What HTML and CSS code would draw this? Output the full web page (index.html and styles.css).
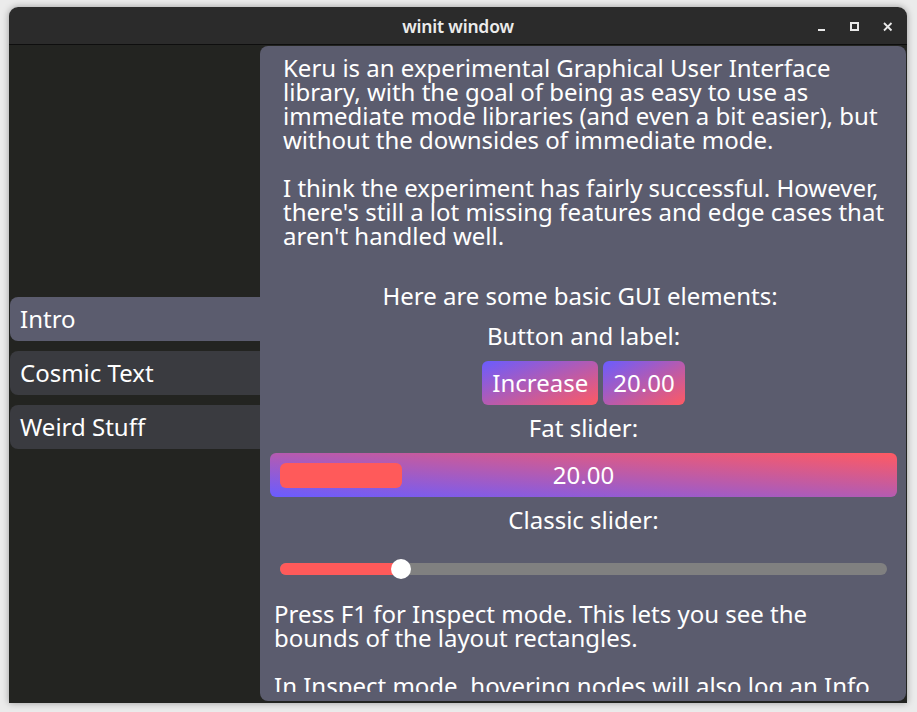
FILE: index.html
```html
<!DOCTYPE html>
<html>
<head>
<meta charset="utf-8">
<link rel="stylesheet" href="styles.css">
</head>
<body>
<div class="window">
  <div class="titlebar">
    <span class="title">winit window</span>
    <div class="controls">
      <svg class="ctl min" width="10" height="10" viewBox="0 0 10 10"><rect x="1" y="7" width="7" height="2" fill="#e8e8e8"/></svg>
      <svg class="ctl max" width="10" height="10" viewBox="0 0 10 10"><rect x="1" y="1" width="7" height="7" fill="none" stroke="#e8e8e8" stroke-width="2"/></svg>
      <svg class="ctl close" width="10" height="10" viewBox="0 0 10 10"><path d="M1 1 L8.5 8.5 M8.5 1 L1 8.5" stroke="#e8e8e8" stroke-width="1.8"/></svg>
    </div>
  </div>
  <div class="main">
    <div class="sidebar">
      <div class="tab active">Intro</div>
      <div class="tab">Cosmic Text</div>
      <div class="tab">Weird Stuff</div>
    </div>
    <div class="panel">
      <div class="intro">
        Keru is an experimental Graphical User Interface<br>
        library, with the goal of being as easy to use as<br>
        immediate mode libraries (and even a bit easier), but<br>
        without the downsides of immediate mode.<br>
        <br>
        I think the experiment has fairly successful. However,<br>
        there's still a lot missing features and edge cases that<br>
        aren't handled well.
      </div>
      <div class="label first">Here are some basic GUI elements:</div>
      <div class="label second">Button and label:</div>
      <div class="buttons">
        <div class="btn">Increase</div>
        <div class="btn">20.00</div>
      </div>
      <div class="label fat-label">Fat slider:</div>
      <div class="fat-slider">
        <div class="fat-fill" style="width: 122px"></div>
        <span class="fat-value">20.00</span>
      </div>
      <div class="label classic-label">Classic slider:</div>
      <div class="classic-slider">
        <div class="track">
          <div class="track-fill" style="width: 121px"></div>
          <div class="knob"></div>
        </div>
      </div>
      <div class="outro">
        Press F1 for Inspect mode. This lets you see the<br>
        bounds of the layout rectangles.<br>
        <br>
        In Inspect mode, hovering nodes will also log an Info<br>
        message with the node's name and location.
      </div>
    </div>
  </div>
</div>
</body>
</html>
```
FILE: styles.css
```css
html, body {
  margin: 0;
  padding: 0;
}
body {
  background: #ebebeb;
  width: 917px;
  height: 712px;
  overflow: hidden;
  font-family: "Noto Sans", sans-serif;
}
.window {
  margin: 7px 0 0 9px;
  width: 898px;
  height: 696px;
  display: flex;
  flex-direction: column;
  border-radius: 9px 9px 0 0;
  overflow: hidden;
  box-shadow: 0 0 7px rgba(0, 0, 0, 0.35);
}
.titlebar {
  height: 37px;
  flex: none;
  background: #2b2b2b;
  border-bottom: 1px solid #0e0e0e;
  display: flex;
  align-items: center;
  justify-content: center;
  position: relative;
}
.title {
  color: #ececec;
  font-size: 17.5px;
  font-weight: 600;
  letter-spacing: -0.2px;
}
.controls {
  position: absolute;
  right: 14px;
  top: 15px;
  display: flex;
  gap: 23px;
}
.ctl {
  display: block;
}
.main {
  flex: 1;
  display: flex;
  background: #232421;
  padding: 1px 1px 2px 1px;
  min-height: 0;
}
.sidebar {
  width: 250px;
  flex: none;
  display: flex;
  flex-direction: column;
  justify-content: center;
  gap: 10px;
  padding-bottom: 2px;
}
.tab {
  height: 44px;
  box-sizing: border-box;
  border-radius: 8px 0 0 8px;
  background: #3a3b40;
  color: #ffffff;
  font-size: 24px;
  line-height: 43px;
  padding-left: 10px;
}
.tab.active {
  background: #5b5c6e;
}
.panel {
  flex: 1;
  background: #5b5c6e;
  border-radius: 8px;
  overflow: hidden;
  display: flex;
  flex-direction: column;
  align-items: center;
  padding: 10px 9px 0 10px;
  color: #ffffff;
  font-size: 24px;
  line-height: 24px;
}
.panel > * {
  flex: none;
}
.intro {
  align-self: stretch;
  padding-left: 13px;
  white-space: nowrap;
}
.outro {
  align-self: stretch;
  padding: 5px 0 0 4px;
  margin-top: 6px;
  height: 90px;
  overflow: hidden;
  white-space: nowrap;
}
.label {
  height: 24px;
}
.label.first {
  margin-top: 36px;
  padding-right: 7px;
}
.label.second {
  margin-top: 16px;
}
.label.fat-label {
  margin-top: 11px;
}
.label.classic-label {
  margin-top: 11px;
}
.buttons {
  display: flex;
  gap: 5px;
  margin-top: 13px;
}
.btn {
  height: 44px;
  line-height: 43px;
  padding: 0 10px;
  border-radius: 6px;
  background: linear-gradient(to bottom right, #6a5cff, #ff5a62);
}
.fat-slider {
  align-self: stretch;
  margin-top: 13px;
  height: 44px;
  border-radius: 6px;
  background: linear-gradient(to top right, #6a5cff, #ff5a62);
  position: relative;
  display: flex;
  align-items: center;
  justify-content: center;
}
.fat-fill {
  position: absolute;
  left: 10px;
  top: 10px;
  height: 25px;
  border-radius: 6px;
  background: #ff5a5a;
}
.fat-value {
  position: relative;
}
.classic-slider {
  align-self: stretch;
  margin-top: 15px;
  height: 44px;
  display: flex;
  align-items: center;
  padding: 0 10px;
}
.track {
  flex: 1;
  height: 12px;
  border-radius: 6px;
  background: #808080;
  position: relative;
}
.track-fill {
  height: 12px;
  border-radius: 6px 0 0 6px;
  background: #ff5a5a;
}
.knob {
  position: absolute;
  left: 111px;
  top: -4px;
  width: 20px;
  height: 20px;
  border-radius: 50%;
  background: #ffffff;
}
```
